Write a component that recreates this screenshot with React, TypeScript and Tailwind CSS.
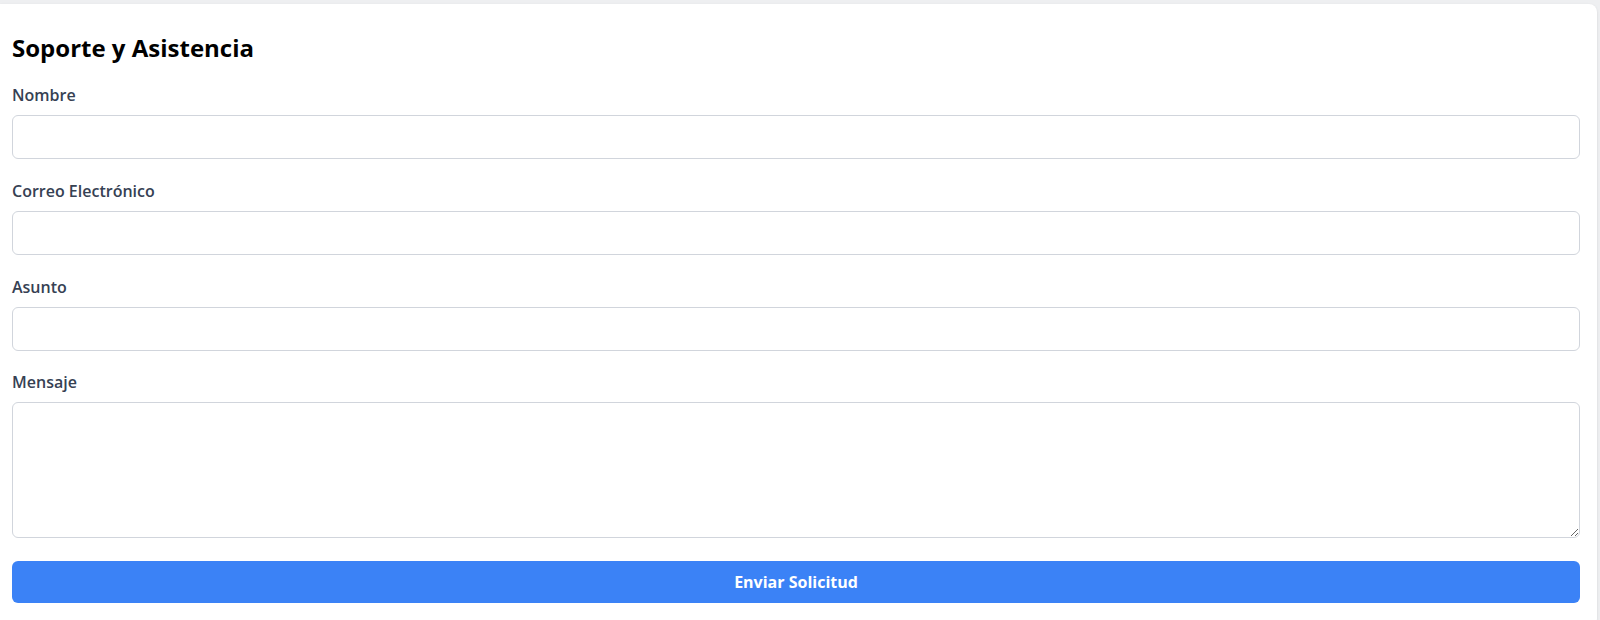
import React from "react";

const fields = [
  { label: "Nombre", type: "text", gap: "mb-5" },
  { label: "Correo Electrónico", type: "email", gap: "mb-5" },
  { label: "Asunto", type: "text", gap: "mb-[19px]" },
];

export default function App() {
  return (
    <div className="min-h-screen bg-[#eeeff1] pt-1 font-['Open_Sans',sans-serif]">
      <div className="mr-[3px] rounded-r-lg bg-white pl-3 pr-[17px] pt-7 pb-6 shadow-sm">
        <h2 className="mb-[19px] text-2xl leading-8 font-bold text-black">Soporte y Asistencia</h2>
        <form onSubmit={(e) => e.preventDefault()}>
          {fields.map((f) => (
            <div key={f.label} className={f.gap}>
              <label className="mb-2 block text-base leading-6 font-semibold text-gray-700">{f.label}</label>
              <input
                type={f.type}
                className="block h-11 w-full rounded-md border border-gray-300 px-3 text-base outline-none"
              />
            </div>
          ))}
          <div className="mb-[23px]">
            <label className="mb-2 block text-base leading-6 font-semibold text-gray-700">Mensaje</label>
            <textarea className="block h-[136px] w-full rounded-md border border-gray-300 px-3 py-2 text-base outline-none" />
          </div>
          <button
            type="submit"
            className="block h-[42px] w-full rounded-md bg-[#3b82f6] text-base font-bold text-white"
          >
            Enviar Solicitud
          </button>
        </form>
      </div>
    </div>
  );
}
